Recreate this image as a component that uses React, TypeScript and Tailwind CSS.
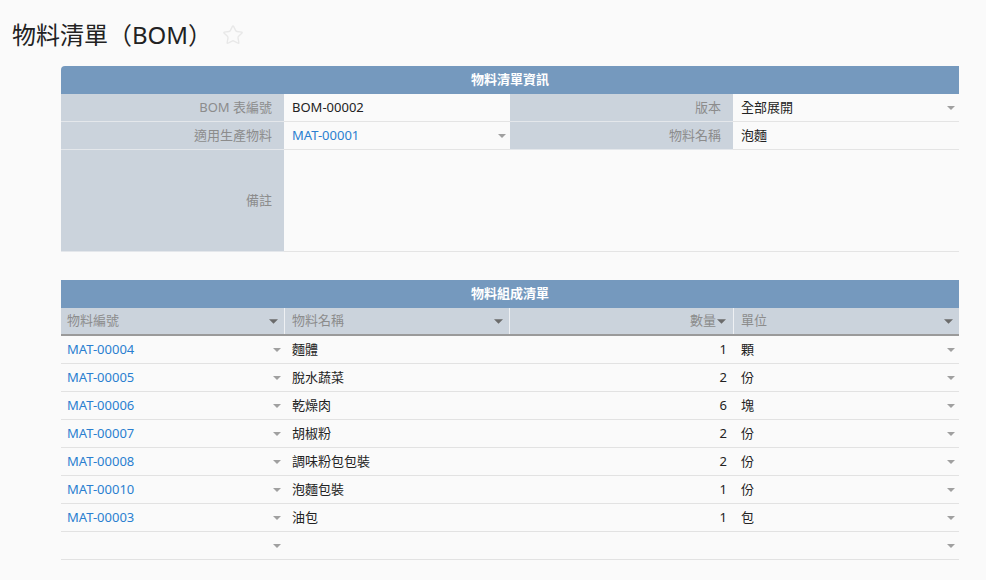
import { Star } from 'lucide-react';

const font = { fontFamily: '"Noto Sans", "Noto Sans CJK TC", sans-serif' };

type Row = { code: string; name: string; qty: string; unit: string };

const rows: Row[] = [
  { code: 'MAT-00004', name: '麵體', qty: '1', unit: '顆' },
  { code: 'MAT-00005', name: '脫水蔬菜', qty: '2', unit: '份' },
  { code: 'MAT-00006', name: '乾燥肉', qty: '6', unit: '塊' },
  { code: 'MAT-00007', name: '胡椒粉', qty: '2', unit: '份' },
  { code: 'MAT-00008', name: '調味粉包包裝', qty: '2', unit: '份' },
  { code: 'MAT-00010', name: '泡麵包裝', qty: '1', unit: '份' },
  { code: 'MAT-00003', name: '油包', qty: '1', unit: '包' },
];

function Caret({ dark = false }: { dark?: boolean }) {
  return (
    <svg
      width={dark ? 9 : 8}
      height={dark ? 5 : 4}
      viewBox="0 0 10 5"
      className={dark ? 'fill-[#6b6b6b]' : 'fill-[#a0a0a0]'}
    >
      <path d="M0 0 L10 0 L5 5 Z" />
    </svg>
  );
}

function Label({ children }: { children: React.ReactNode }) {
  return (
    <div className="flex h-[28px] items-center justify-end border-b border-[#e4e7eb] bg-[#cbd3dc] pr-[12px] text-[13px] text-[#8c8c8c]">
      {children}
    </div>
  );
}

export default function App() {
  return (
    <div className="min-h-[580px] w-[986px] bg-[#fafafa] text-[#222]" style={font}>
      <div className="flex items-center gap-[10px] pl-[12px] pt-[17px]">
        <h1 className="text-[24px] leading-[36px] text-[#222]">物料清單（BOM）</h1>
        <Star className="h-[22px] w-[22px] text-[#e8e8e8]" strokeWidth={1.5} />
      </div>

      {/* 物料清單資訊 */}
      <div className="ml-[61px] mt-[13px] w-[898px]">
        <div className="flex h-[28px] items-center justify-center rounded-tl-[4px] bg-[#7599be] text-[13px] font-bold text-white">
          物料清單資訊
        </div>
        <div className="grid grid-cols-[223px_226px_223px_226px]">
          <Label>BOM 表編號</Label>
          <div className="flex h-[28px] items-center border-b border-[#e4e4e4] pl-[8px] text-[13px]">BOM-00002</div>
          <Label>版本</Label>
          <div className="flex h-[28px] items-center justify-between border-b border-[#e4e4e4] pl-[8px] pr-[4px] text-[13px]">
            全部展開
            <Caret />
          </div>
          <Label>適用生產物料</Label>
          <div className="flex h-[28px] items-center justify-between border-b border-[#e4e4e4] pl-[8px] pr-[4px] text-[13px] text-[#2a7fd0]">
            MAT-00001
            <Caret />
          </div>
          <Label>物料名稱</Label>
          <div className="flex h-[28px] items-center border-b border-[#e4e4e4] pl-[8px] text-[13px]">泡麵</div>
        </div>
        <div className="flex h-[102px]">
          <div className="flex w-[223px] items-center justify-end border-b border-[#e4e7eb] bg-[#cbd3dc] pr-[12px] text-[13px] text-[#8c8c8c]">
            備註
          </div>
          <div className="flex-1 border-b border-[#e4e4e4]" />
        </div>
      </div>

      {/* 物料組成清單 */}
      <div className="ml-[61px] mt-[28px] w-[898px]">
        <div className="flex h-[28px] items-center justify-center bg-[#7599be] text-[13px] font-bold text-white">
          物料組成清單
        </div>
        <div className="grid h-[28px] grid-cols-[223px_225px_224px_226px] border-b-[2px] border-[#9a9a9a] bg-[#cbd3dc] text-[13px] text-[#8c8c8c]">
          <div className="flex items-center justify-between pl-[6px] pr-[6px]">
            物料編號
            <Caret dark />
          </div>
          <div className="flex items-center justify-between border-l border-[#eef0f3] pl-[7px] pr-[6px]">
            物料名稱
            <Caret dark />
          </div>
          <div className="flex items-center justify-end gap-[1px] border-l border-[#eef0f3] pr-[7px]">
            數量
            <Caret dark />
          </div>
          <div className="flex items-center justify-between border-l border-[#eef0f3] pl-[7px] pr-[6px]">
            單位
            <Caret dark />
          </div>
        </div>
        {[...rows, { code: '', name: '', qty: '', unit: '' }].map((r, i) => (
          <div
            key={i}
            className="grid h-[28px] grid-cols-[223px_225px_224px_226px] border-b border-[#e2e2e2] text-[13px]"
          >
            <div className="flex items-center justify-between pl-[6px] pr-[3px] text-[#2a7fd0]">
              <span>{r.code}</span>
              <Caret />
            </div>
            <div className="flex items-center pl-[8px]">{r.name}</div>
            <div className="flex items-center justify-end pr-[6px]">{r.qty}</div>
            <div className="flex items-center justify-between pl-[8px] pr-[4px]">
              <span>{r.unit}</span>
              <Caret />
            </div>
          </div>
        ))}
      </div>
    </div>
  );
}
